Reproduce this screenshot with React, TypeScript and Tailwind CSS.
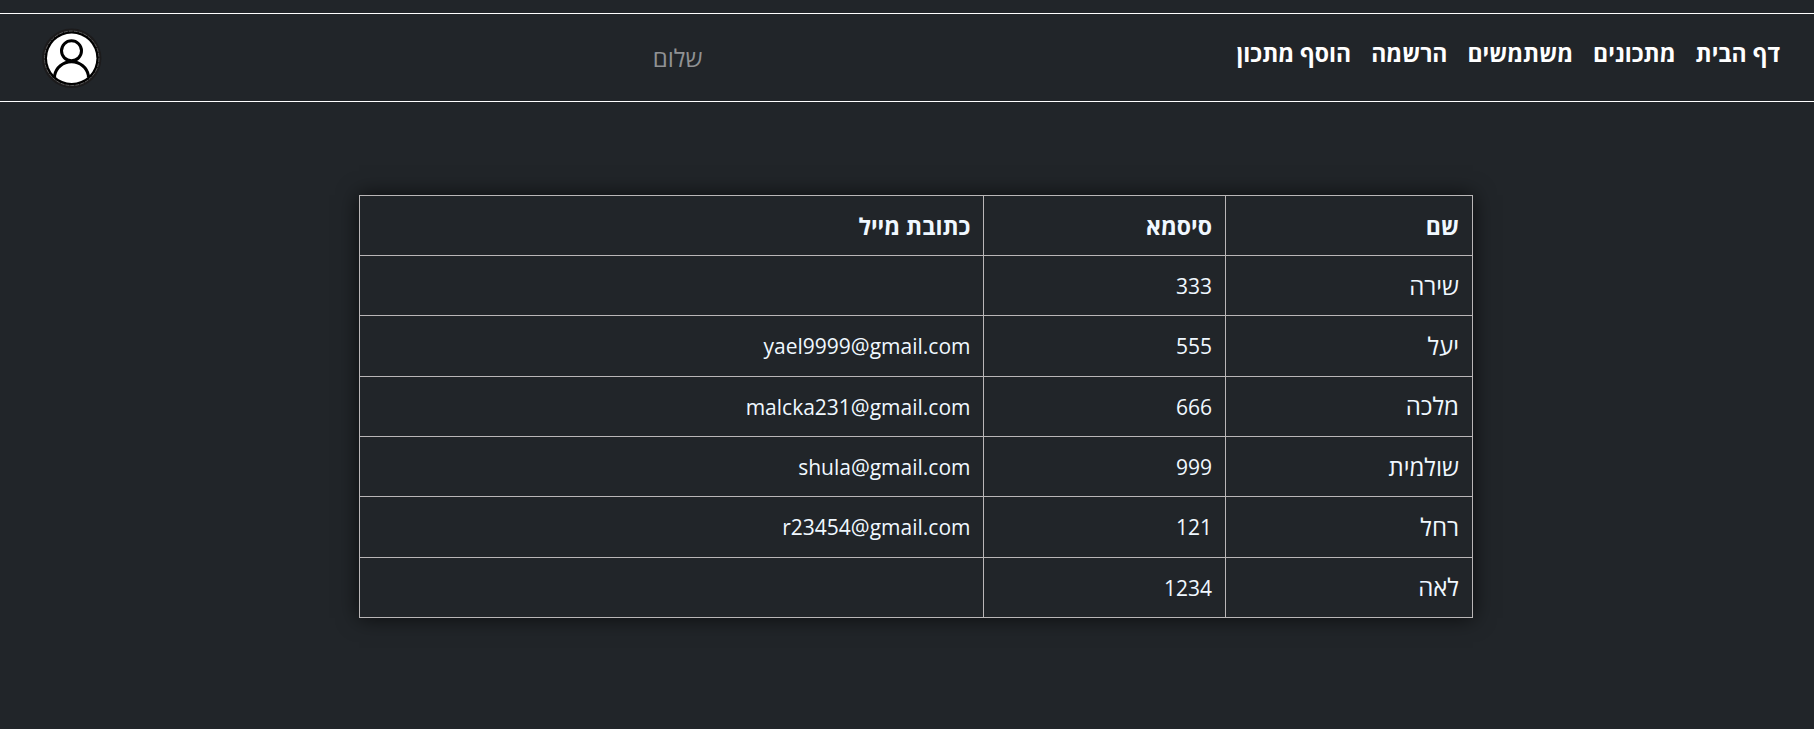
const links = ['דף הבית', 'מתכונים', 'משתמשים', 'הרשמה', 'הוסף מתכון'];

const users = [
  { name: 'שירה', password: '333', email: '' },
  { name: 'יעל', password: '555', email: 'yael9999@gmail.com' },
  { name: 'מלכה', password: '666', email: 'malcka231@gmail.com' },
  { name: 'שולמית', password: '999', email: 'shula@gmail.com' },
  { name: 'רחל', password: '121', email: 'r23454@gmail.com' },
  { name: 'לאה', password: '1234', email: '' },
];

function Avatar() {
  return (
    <svg viewBox="0 0 60 60" className="block size-[60px]" aria-hidden="true">
      <circle cx="29.7" cy="30.3" r="29.7" fill="#1c1b1c" />
      <circle cx="29.7" cy="30.3" r="27.2" fill="#000" stroke="#777" strokeWidth="0.7" strokeDasharray="4 1" />
      <circle cx="29.7" cy="30.3" r="24.7" fill="#fff" />
      <g fill="none" stroke="#000" strokeWidth="3">
        <circle cx="29.5" cy="22.8" r="10" />
        <path d="M12.6 49V47.5C14 39.8 20.8 33.8 29.5 33.8S45 39.8 46.4 47.5V49" />
      </g>
    </svg>
  );
}

export default function App() {
  return (
    <div
      dir="rtl"
      className="min-h-screen bg-[#212529] pt-[13px] font-['Open_Sans','Noto_Sans',sans-serif] text-[21px] leading-[30px] text-white"
    >
      <header className="grid grid-cols-[62%_1fr_auto] border-y border-white pt-[14px] pr-[34px] pb-[13px] pl-[42px]">
        <nav className="flex gap-[20px] pt-[10px] text-[23px] font-bold leading-[30px]">
          {links.map((label) => (
            <a key={label} href="#" className="whitespace-nowrap">
              {label}
            </a>
          ))}
        </nav>
        <p className="self-center text-[24px] leading-[30px] text-[#909294]">שלום</p>
        <button type="button" aria-label="חשבון" className="size-[60px] rounded-full">
          <Avatar />
        </button>
      </header>
      <main className="ms-[18.8%] mt-[93px] w-[61.4%]">
        <table className="h-[423px] w-full table-fixed border-collapse text-right text-[#f0f8ff] shadow-[0_0_20px_rgba(0,0,0,0.7)]">
          <colgroup>
            <col className="w-[22.2%]" />
            <col className="w-[21.7%]" />
            <col />
          </colgroup>
          <thead>
            <tr className="h-[60px]">
              {['שם', 'סיסמא', 'כתובת מייל'].map((title) => (
                <th key={title} scope="col" className="border border-[#b9b6b7] px-[13px] text-[23px] font-bold leading-[30px]">
                  {title}
                </th>
              ))}
            </tr>
          </thead>
          <tbody>
            {users.map((user) => (
              <tr key={user.name} className="h-[60px]">
                <td className="border border-[#b9b6b7] px-[13px] text-[24px] leading-[30px]">{user.name}</td>
                <td className="border border-[#b9b6b7] px-[13px] pt-px">{user.password}</td>
                <td className="border border-[#b9b6b7] px-[13px] pt-px">{user.email}</td>
              </tr>
            ))}
          </tbody>
        </table>
      </main>
    </div>
  );
}
